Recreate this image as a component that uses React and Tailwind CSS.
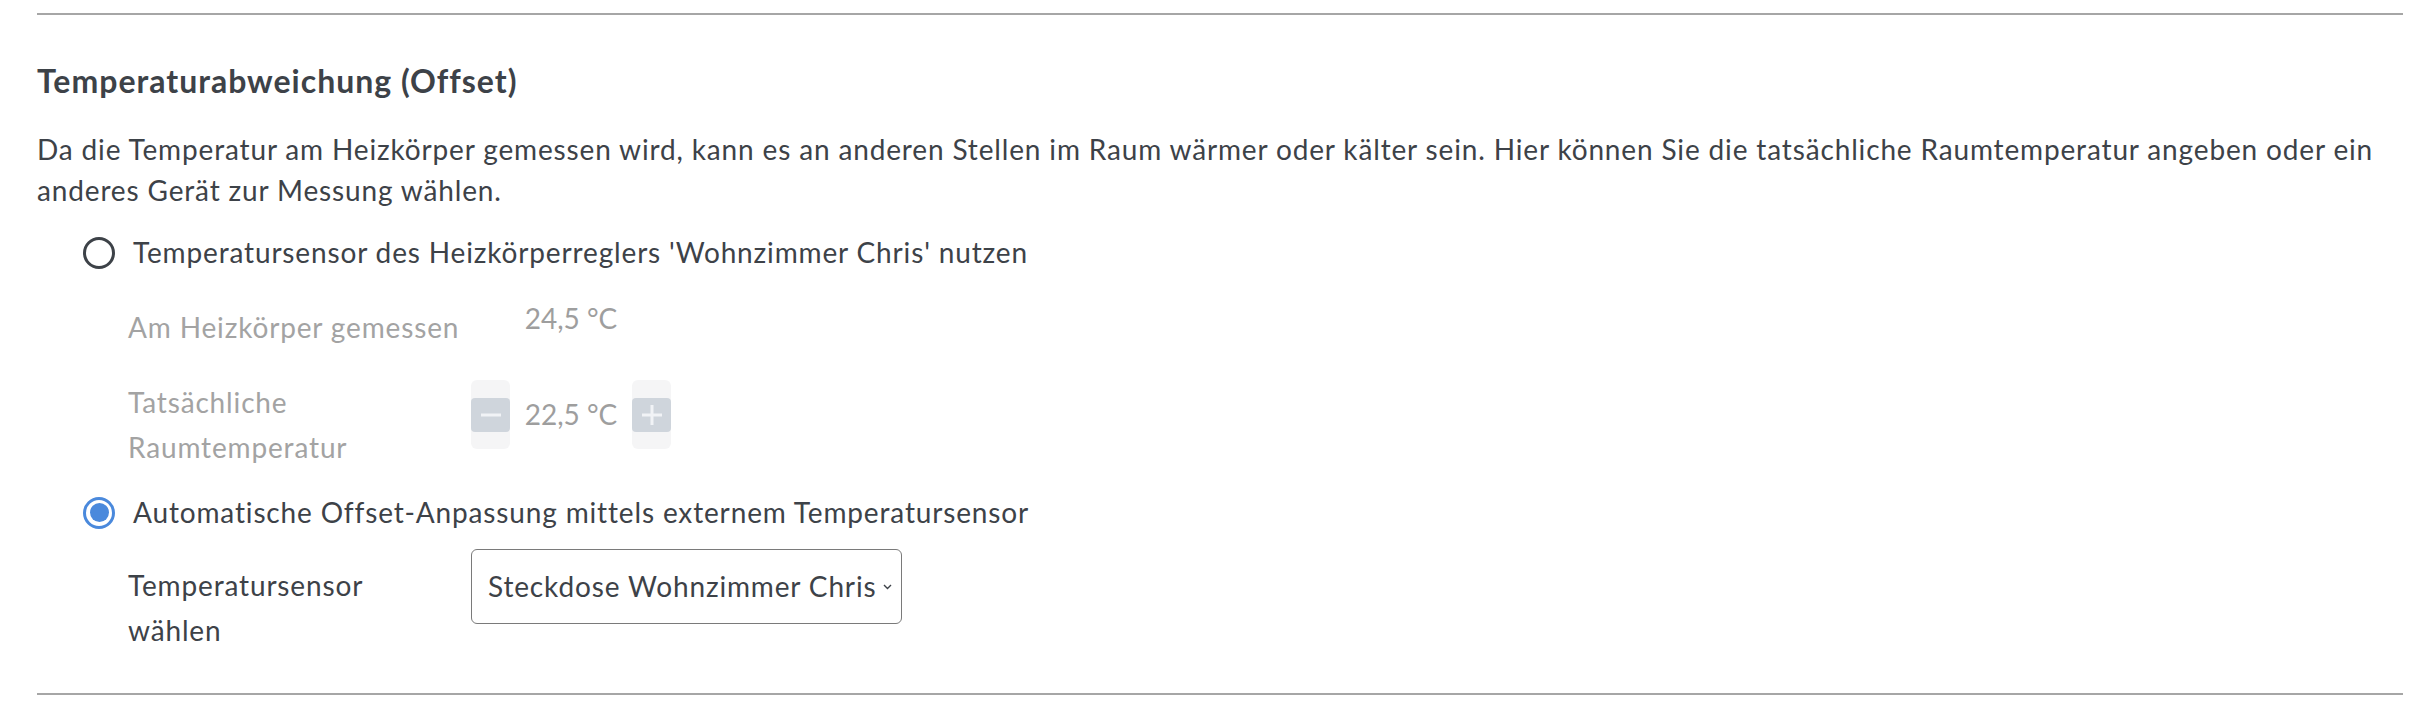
function Radio({ checked }) {
  if (checked) {
    return (
      <span className="flex h-8 w-8 shrink-0 items-center justify-center rounded-full border-[3px] border-[#4a89dc]">
        <span className="h-[19px] w-[19px] rounded-full bg-[#4a89dc]" />
      </span>
    )
  }
  return <span className="h-8 w-8 shrink-0 rounded-full border-[3px] border-[#3d4248]" />
}

function StepButton({ plus }) {
  return (
    <button className="flex h-[69px] w-[39px] items-center rounded-md bg-[#f5f5f6]">
      <span className="flex h-[34px] w-full items-center justify-center rounded bg-[#cfd5dc]">
        <svg width="20" height="20" viewBox="0 0 20 20" stroke="#f1f3f6" strokeWidth="3">
          <line x1="0" y1="10" x2="20" y2="10" />
          {plus && <line x1="10" y1="0" x2="10" y2="20" />}
        </svg>
      </span>
    </button>
  )
}

export default function App() {
  return (
    <div className="min-h-screen bg-white pl-[37px] pr-[17px] pt-[13px] font-[Lato,sans-serif] tracking-[0.85px] text-[#3d4248]">
      <div className="h-[2px] bg-[#a6a6a6]" />

      <h2 className="mt-[46px] text-[32px] font-bold leading-[40px] tracking-[1px]">Temperaturabweichung (Offset)</h2>
      <p className="mt-[28px] text-[28px] leading-[41px]">
        Da die Temperatur am Heizkörper gemessen wird, kann es an anderen Stellen im Raum wärmer oder kälter sein. Hier können Sie die tatsächliche Raumtemperatur angeben oder ein anderes Gerät zur Messung wählen.
      </p>

      {/* option 1: internal sensor */}
      <label className="mt-[21px] flex items-center gap-[18px] pl-[46px] text-[28px] leading-[41px]">
        <Radio />
        Temperatursensor des Heizkörperreglers 'Wohnzimmer Chris' nutzen
      </label>

      <div className="mt-[25px] flex pl-[91px] text-[28px]">
        <div className="mr-[8px] w-[335px] pt-[7px] leading-[45px] text-[#a3a3a3]">Am Heizkörper gemessen</div>
        <div className="w-[200px] text-center leading-[41px] tracking-normal text-[#9e9e9e]">24,5 °C</div>
      </div>

      <div className="mt-[9px] flex pl-[91px] text-[28px]">
        <div className="mr-[8px] w-[335px] pt-[21px] leading-[45px] text-[#a3a3a3]">Tatsächliche Raumtemperatur</div>
        <div className="flex w-[200px] items-center justify-between leading-[41px] tracking-normal text-[#9e9e9e]">
          <StepButton />
          <span>22,5 °C</span>
          <StepButton plus />
        </div>
      </div>

      {/* option 2: external sensor */}
      <label className="mt-[22px] flex items-center gap-[18px] pl-[46px] text-[28px] leading-[41px]">
        <Radio checked />
        Automatische Offset-Anpassung mittels externem Temperatursensor
      </label>

      <div className="mt-[16px] flex pl-[91px] text-[28px]">
        <div className="mr-[8px] w-[335px] pt-[14px] leading-[45px]">Temperatursensor wählen</div>
        <div className="flex h-[75px] w-[431px] items-center justify-between rounded-md border border-[#7a7a7a] pl-[16px] pr-[9px] leading-[41px]">
          <span>Steckdose Wohnzimmer Chris</span>
          <svg width="9" height="6" viewBox="0 0 9 6" fill="none" stroke="#3d4248" strokeWidth="1.4">
            <polyline points="1,1 4.5,4.5 8,1" />
          </svg>
        </div>
      </div>

      <div className="mt-[40px] h-[2px] bg-[#a6a6a6]" />
    </div>
  )
}
